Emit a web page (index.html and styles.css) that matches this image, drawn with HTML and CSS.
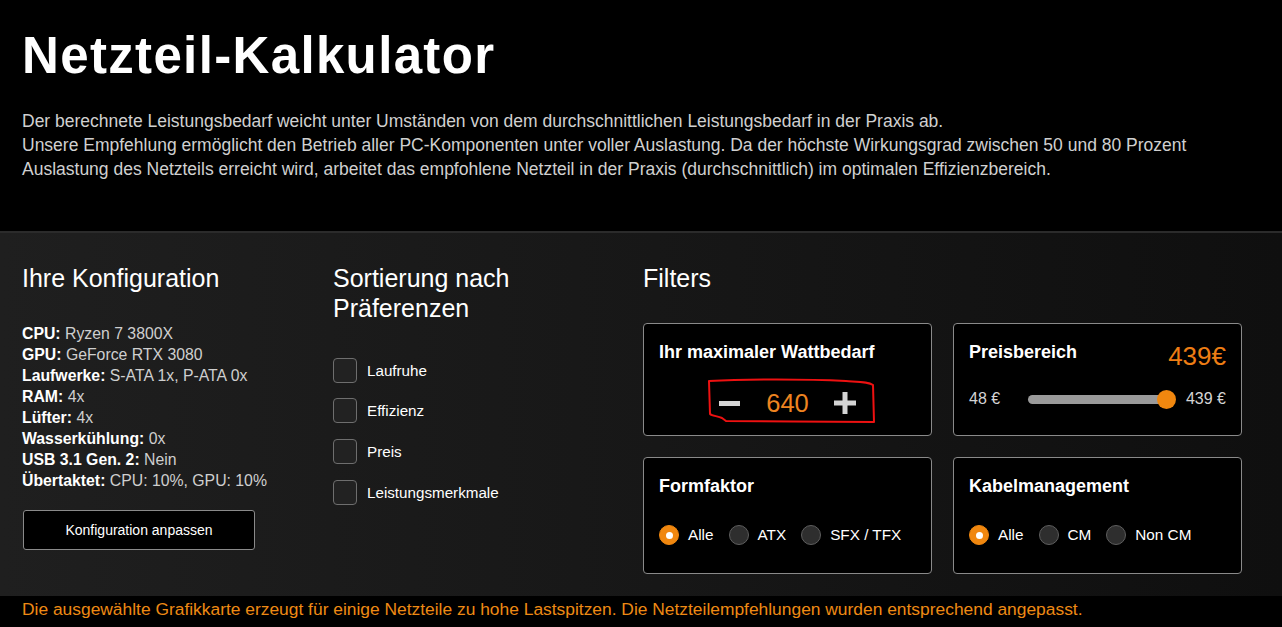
FILE: index.html
```html
<!DOCTYPE html>
<html lang="de">
<head>
<meta charset="utf-8">
<title>Netzteil-Kalkulator</title>
<link rel="stylesheet" href="styles.css">
</head>
<body>
<header class="hero">
  <h1 class="hero-title">Netzteil-Kalkulator</h1>
  <p class="hero-text">Der berechnete Leistungsbedarf weicht unter Umständen von dem durchschnittlichen Leistungsbedarf in der Praxis ab.<br>Unsere Empfehlung ermöglicht den Betrieb aller PC-Komponenten unter voller Auslastung. Da der höchste Wirkungsgrad zwischen 50 und 80 Prozent<br>Auslastung des Netzteils erreicht wird, arbeitet das empfohlene Netzteil in der Praxis (durchschnittlich) im optimalen Effizienzbereich.</p>
</header>

<main class="panel">
  <section class="col col-config">
    <h2 class="col-title">Ihre Konfiguration</h2>
    <ul class="config-list">
      <li><b>CPU:</b> Ryzen 7 3800X</li>
      <li><b>GPU:</b> GeForce RTX 3080</li>
      <li><b>Laufwerke:</b> S-ATA 1x, P-ATA 0x</li>
      <li><b>RAM:</b> 4x</li>
      <li><b>Lüfter:</b> 4x</li>
      <li><b>Wasserkühlung:</b> 0x</li>
      <li><b>USB 3.1 Gen. 2:</b> Nein</li>
      <li><b>Übertaktet:</b> CPU: 10%, GPU: 10%</li>
    </ul>
    <button class="btn-outline">Konfiguration anpassen</button>
  </section>

  <section class="col col-sort">
    <h2 class="col-title">Sortierung nach<br>Präferenzen</h2>
    <ul class="check-list">
      <li><span class="checkbox"></span>Laufruhe</li>
      <li><span class="checkbox"></span>Effizienz</li>
      <li><span class="checkbox"></span>Preis</li>
      <li><span class="checkbox"></span>Leistungsmerkmale</li>
    </ul>
  </section>

  <section class="col col-filters">
    <h2 class="col-title">Filters</h2>
    <div class="filter-grid">
      <div class="card card-watt">
        <h3 class="card-title">Ihr maximaler Wattbedarf</h3>
        <div class="stepper">
          <svg class="step-btn" width="22" height="22" viewBox="0 0 22 22"><rect x="0" y="9" width="21" height="5" fill="#d4d4d4"/></svg>
          <span class="step-value">640</span>
          <svg class="step-btn" width="22" height="22" viewBox="0 0 22 22"><rect x="0" y="8.5" width="22" height="5" fill="#d4d4d4"/><rect x="8.5" y="0" width="5" height="22" fill="#d4d4d4"/></svg>
        </div>
        <svg class="scribble" width="172" height="52" viewBox="0 0 172 52"><path d="M3 3 C40 1 100 1 140 3 C155 4 163 4 167 7 L168 44 C140 44 60 43 20 43 L16 40 C12 38 6 38 4 36 Z" fill="none" stroke="#e11" stroke-width="2" stroke-linejoin="round"/></svg>
      </div>

      <div class="card card-price">
        <div class="card-head">
          <h3 class="card-title">Preisbereich</h3>
          <span class="price-big">439€</span>
        </div>
        <div class="slider-row">
          <span class="slider-label">48 €</span>
          <div class="slider-track"><span class="slider-thumb"></span></div>
          <span class="slider-label">439 €</span>
        </div>
      </div>

      <div class="card">
        <h3 class="card-title">Formfaktor</h3>
        <div class="radio-row">
          <label class="radio"><span class="radio-dot is-on"></span>Alle</label>
          <label class="radio"><span class="radio-dot"></span>ATX</label>
          <label class="radio"><span class="radio-dot"></span>SFX / TFX</label>
        </div>
      </div>

      <div class="card">
        <h3 class="card-title">Kabelmanagement</h3>
        <div class="radio-row">
          <label class="radio"><span class="radio-dot is-on"></span>Alle</label>
          <label class="radio"><span class="radio-dot"></span>CM</label>
          <label class="radio"><span class="radio-dot"></span>Non CM</label>
        </div>
      </div>
    </div>
  </section>
</main>

<footer class="notice">Die ausgewählte Grafikkarte erzeugt für einige Netzteile zu hohe Lastspitzen. Die Netzteilempfehlungen wurden entsprechend angepasst.</footer>
</body>
</html>
```
FILE: styles.css
```css
* { box-sizing: border-box; }
html, body { margin: 0; padding: 0; }
body {
  background: #000;
  color: #fff;
  font-family: "Liberation Sans", Arial, sans-serif;
  width: 1282px;
  height: 627px;
  overflow: hidden;
}

.hero {
  height: 231px;
  padding: 27px 22px 0;
  background: #000;
}
.hero-title {
  margin: 0;
  font-size: 51px;
  line-height: 58px;
  font-weight: 700;
  letter-spacing: 1.35px;
  color: #fff;
}
.hero-text {
  margin: 24px 0 0;
  font-size: 17.5px;
  line-height: 24px;
  color: #d0d0d0;
  font-weight: 400;
}

.panel {
  height: 365px;
  border-top: 2px solid #2b2b2b;
  background: linear-gradient(to right, #1f1f1f 0%, #181818 45%, #0f0f0f 100%);
  display: flex;
  padding: 30px 0 0 22px;
}
.col-config { width: 311px; }
.col-sort { width: 310px; }
.col-filters { width: 600px; }

.col-title {
  margin: 0;
  font-size: 25px;
  line-height: 30px;
  font-weight: 400;
  color: #fff;
}

.config-list {
  list-style: none;
  margin: 30px 0 0;
  padding: 0;
  font-size: 15.8px;
  line-height: 21px;
  color: #cfcfcf;
}
.config-list b { color: #fff; font-weight: 700; }

.btn-outline {
  margin-top: 19px;
  margin-left: 1px;
  width: 232px;
  height: 40px;
  background: #000;
  border: 1px solid #8a8a8a;
  border-radius: 3px;
  color: #fff;
  font-family: inherit;
  font-size: 14px;
  cursor: pointer;
}

.check-list {
  list-style: none;
  margin: 35px 0 0;
  padding: 0;
  display: flex;
  flex-direction: column;
  gap: 16.7px;
  font-size: 15.2px;
  color: #fff;
}
.check-list li {
  display: flex;
  align-items: center;
  gap: 10px;
  height: 24px;
}
.checkbox {
  width: 24px;
  height: 25px;
  border: 1px solid #6e6e6e;
  border-radius: 4px;
  background: #222;
}

.filter-grid {
  margin-top: 30px;
  display: grid;
  grid-template-columns: 289px 289px;
  grid-template-rows: 113px 117px;
  gap: 21px;
}
.card {
  position: relative;
  background: #000;
  border: 1px solid #8a8a8a;
  border-radius: 4px;
  padding: 18px 15px 0;
}
.card-title {
  margin: 0;
  font-size: 18px;
  line-height: 20px;
  font-weight: 700;
  color: #fff;
}

.stepper {
  margin-top: 26px;
  display: flex;
  align-items: center;
  justify-content: center;
  gap: 25px;
}
.step-value {
  font-size: 25.5px;
  font-weight: 400;
  color: #ee8420;
  line-height: 30px;
}
.scribble {
  position: absolute;
  left: 62px;
  top: 54px;
}

.card-head {
  display: flex;
  justify-content: space-between;
  align-items: flex-start;
}
.price-big {
  font-size: 26px;
  color: #ee7d14;
  line-height: 30px;
  margin-top: -1px;
}
.slider-row {
  margin-top: 19px;
  display: flex;
  align-items: center;
  font-size: 16px;
  color: #d4d4d4;
}
.slider-track {
  position: relative;
  flex: 1;
  height: 9px;
  margin: 0 15px 0 28px;
  border-radius: 5px;
  background: #9a9a9a;
}
.slider-thumb {
  position: absolute;
  right: -5px;
  top: 50%;
  width: 19px;
  height: 19px;
  margin-top: -9.5px;
  border-radius: 50%;
  background: #f0870f;
}

.radio-row {
  margin-top: 29px;
  display: flex;
  align-items: center;
  gap: 15px;
  font-size: 15.3px;
  color: #fff;
}
.radio {
  display: flex;
  align-items: center;
  gap: 9px;
}
.radio-dot {
  width: 20px;
  height: 20px;
  border-radius: 50%;
  background: #2e2e2e;
  border: 1px solid #5e5e5e;
}
.radio-dot.is-on {
  background: #f0870f;
  border-color: #f0870f;
  display: flex;
  align-items: center;
  justify-content: center;
}
.radio-dot.is-on::after {
  content: "";
  width: 7px;
  height: 7px;
  border-radius: 50%;
  background: #fff;
}

.notice {
  height: 31px;
  padding: 1px 22px 0;
  font-size: 17.4px;
  line-height: 24px;
  color: #ee8a14;
  background: #000;
}
```
